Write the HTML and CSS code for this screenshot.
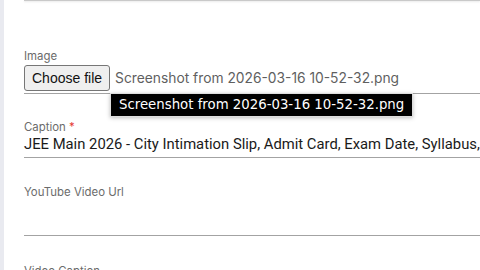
FILE: index.html
```html
<!DOCTYPE html>
<html lang="en">

<head>
  <meta charset="UTF-8" />
  <meta name="viewport" content="width=device-width, initial-scale=1.0" />
  <title>Edit Post</title>
  <link rel="stylesheet" href="styles.css">
</head>

<body>

  <div class="rail"></div>

  <div class="form">
    <div class="prev-field"></div>

    <div class="field field-image">
      <div class="label">Image</div>
      <div class="control file-control">
        <button class="file-btn" type="button">Choose file</button>
        <span class="file-name">Screenshot from 2026-03-16 10-52-32.png</span>
        <!-- tooltip shown on hover -->
        <div class="tooltip">Screenshot from 2026-03-16 10-52-32.png</div>
      </div>
    </div>

    <div class="field field-caption">
      <div class="label">Caption <span class="req">*</span></div>
      <div class="control">
        <div class="value">JEE Main 2026 - City Intimation Slip, Admit Card, Exam Date, Syllabus, Pattern</div>
      </div>
    </div>

    <div class="field field-url">
      <div class="label">YouTube Video Url</div>
      <div class="control empty"></div>
    </div>

    <div class="field field-vcap">
      <div class="label">Video Caption</div>
      <div class="control empty"></div>
    </div>
  </div>

</body>

</html>
```

FILE: styles.css
```css
/* dasar */
* {
  margin: 0;
  padding: 0;
  box-sizing: border-box;
}

body {
  font-family: 'Inter', 'Noto Sans', sans-serif;
  background: #fff;
  display: flex;
  min-height: 100vh;
  overflow: hidden;
}

.rail {
  width: 4px;
  background: #e9eaf0;
  flex-shrink: 0;
}

.form {
  flex: 1;
  padding-left: 20px;
  min-width: 0;
  overflow: hidden;
}

.prev-field {
  height: 1px;
  background: #c9c9c9;
  box-shadow: 0 1px 2px rgba(0, 0, 0, 0.12);
}

.label {
  font-size: 11.4px;
  line-height: 14px;
  color: #6b6b6b;
}

.req {
  color: #e53935;
}

.control {
  border-bottom: 1px solid #a3a3a3;
  white-space: nowrap;
}

/* Image */
.field-image {
  margin-top: 48px;
}

.file-control {
  position: relative;
  display: flex;
  align-items: center;
  padding: 2px 0 2px;
}

.file-btn {
  font-family: 'Liberation Sans', Arial, sans-serif;
  font-size: 14px;
  color: #111;
  background: #efefef;
  border: 1px solid #767676;
  border-radius: 3px;
  height: 26px;
  padding: 0 7px;
}

.file-name {
  margin-left: 5px;
  font-size: 13.8px;
  color: #5f5f5f;
}

.tooltip {
  position: absolute;
  left: 86px;
  top: 30px;
  background: #000;
  color: #fff;
  font-family: 'DejaVu Sans', sans-serif;
  font-size: 13.3px;
  line-height: 22px;
  padding: 0 8px;
  border: 1px solid #ddd;
  box-shadow: 0 1px 4px rgba(0, 0, 0, 0.25);
  z-index: 10;
}

/* Caption */
.field-caption {
  margin-top: 26px;
}

.value {
  font-family: 'Roboto', sans-serif;
  font-size: 14.8px;
  line-height: 18px;
  color: #1a1a1a;
  padding: 1px 0 4px;
}

/* YouTube */
.field-url {
  margin-top: 27px;
}

.field-url .empty {
  height: 37px;
}

/* Video Caption */
.field-vcap {
  margin-top: 28px;
}

.field-vcap .empty {
  height: 37px;
}
```
